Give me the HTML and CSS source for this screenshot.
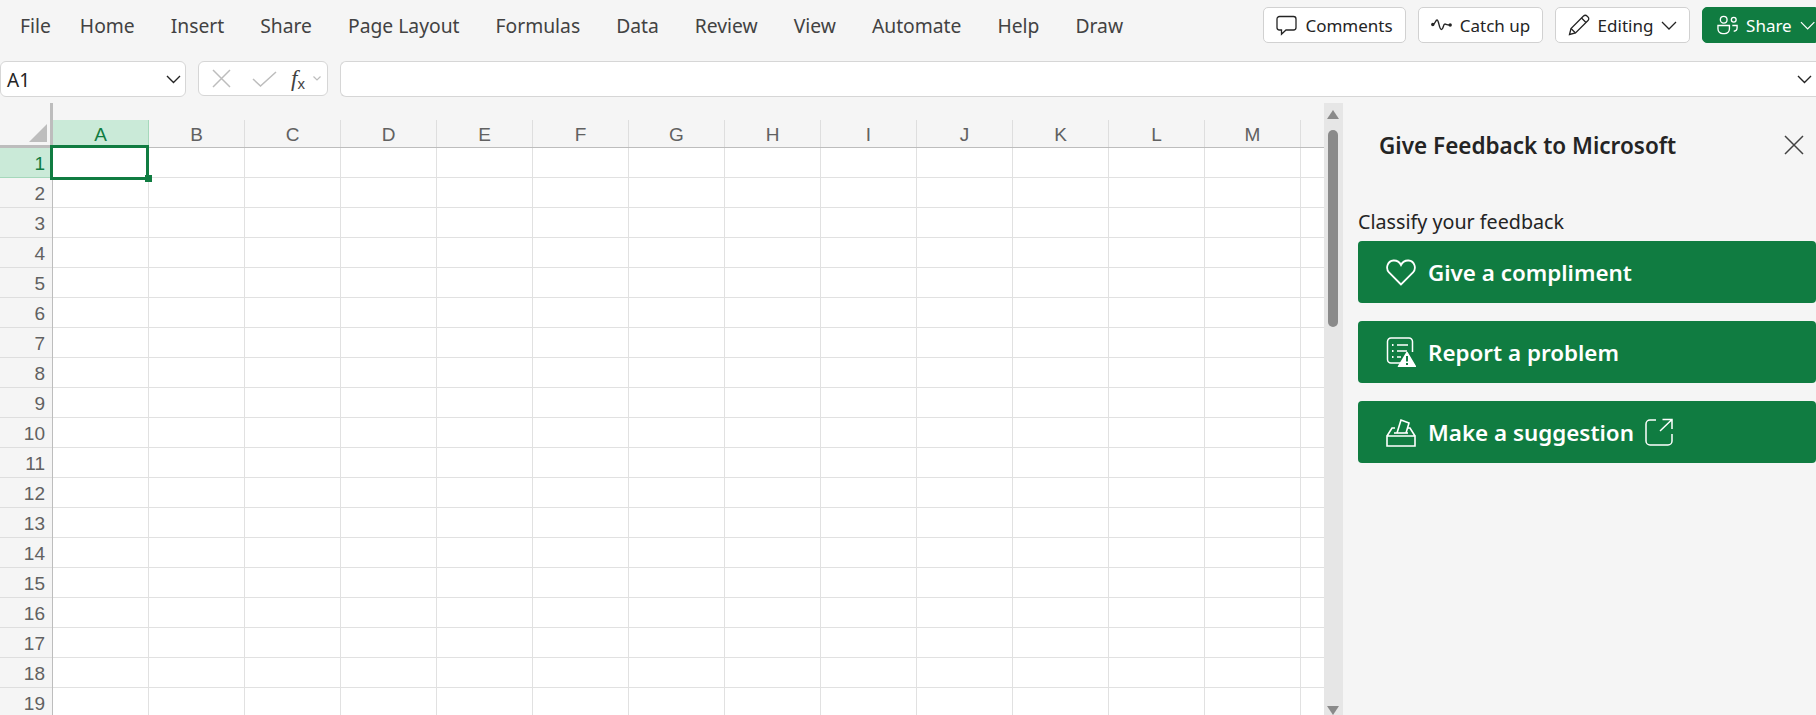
FILE: index.html
```html
<!DOCTYPE html>
<html>
<head>
  <meta charset="UTF-8">
  <title>Book - Excel</title>
  <link rel="stylesheet" href="styles.css">
</head>
<body>
  <div class="menubar">
    <div class="menu">
      <span class="menu-file">File</span>
      <span>Home</span>
      <span>Insert</span>
      <span>Share</span>
      <span>Page Layout</span>
      <span>Formulas</span>
      <span>Data</span>
      <span>Review</span>
      <span>View</span>
      <span>Automate</span>
      <span>Help</span>
      <span>Draw</span>
    </div>
    <div class="actions">
      <button class="btn btn-comments">
        <svg width="21" height="21" viewBox="0 0 21 21" fill="none" stroke="#242424" stroke-width="1.300"><path d="M3.500 1.500h14a2.500 2.500 0 0 1 2.500 2.500v8.500a2.500 2.500 0 0 1-2.500 2.500H10l-4.500 4.300V15h-2A2.500 2.500 0 0 1 1 12.500V4a2.500 2.500 0 0 1 2.500-2.500z"/></svg>
        Comments
      </button>
      <button class="btn btn-catchup">
        <svg width="21" height="12" viewBox="0 0 21 12" fill="none" stroke="#242424" stroke-width="1.400"><circle cx="1.800" cy="5.500" r="1.700" fill="#242424" stroke="none"/><circle cx="19.200" cy="6" r="1.700" fill="#242424" stroke="none"/><path d="M2 5.500c2 0 2.500-4.500 4-4.500 2 0 2 9.500 4.500 9.500 2 0 1.500-5.500 3.500-5.500 1 0 1.500 1 5 1"/></svg>
        Catch up
      </button>
      <button class="btn btn-editing">
        <svg width="22" height="22" viewBox="0 0 22 22" fill="none" stroke="#242424" stroke-width="1.300"><path d="M1.500 20.500l1.500-6L15.500 2a2.400 2.400 0 0 1 3.500 0l1 1a2.400 2.400 0 0 1 0 3.500L7.500 19z"/><path d="M13.500 4l4.500 4.500M3 14.500L7.500 19"/></svg>
        Editing
        <svg class="chev" width="16" height="9" viewBox="0 0 16 9" fill="none" stroke="#242424" stroke-width="1.300"><path d="M1 1l7 7 7-7"/></svg>
      </button>
      <button class="btn btn-share">
        <svg width="22" height="20" viewBox="0 0 22 20" fill="none" stroke="#fff" stroke-width="1.400"><circle cx="7" cy="4.500" r="3.500"/><circle cx="17.500" cy="4.500" r="2.500"/><path d="M1 10.500h12v3.500a5 5 0 0 1-5 5H6a5 5 0 0 1-5-5z"/><path d="M16 10.500h5v2.500a3.500 3.500 0 0 1-3.500 3.500"/></svg>
        Share
        <svg class="chev" width="16" height="9" viewBox="0 0 16 9" fill="none" stroke="#fff" stroke-width="1.300"><path d="M1 1l7 7 7-7"/></svg>
      </button>
    </div>
  </div>

  <div class="formulabar">
    <div class="namebox">
      <span>A1</span>
      <svg width="15" height="9" viewBox="0 0 15 9" fill="none" stroke="#242424" stroke-width="1.400"><path d="M1 1l6.500 6.500L14 1"/></svg>
    </div>
    <div class="fxbox">
      <svg width="19" height="19" viewBox="0 0 19 19" fill="none" stroke="#bdbdbd" stroke-width="1.500"><path d="M1 1l17 17M18 1L1 18"/></svg>
      <svg class="fx-check" width="25" height="16" viewBox="0 0 25 16" fill="none" stroke="#bdbdbd" stroke-width="1.500"><path d="M1 8l7.500 7L24 1"/></svg>
      <span class="fx-label">f<sub>x</sub></span>
      <svg class="fx-chev" width="8" height="5" viewBox="0 0 8 5" fill="none" stroke="#bdbdbd" stroke-width="1.200"><path d="M.5.500L4 4 7.500.500"/></svg>
    </div>
    <div class="formula-input">
      <svg width="15" height="9" viewBox="0 0 15 9" fill="none" stroke="#242424" stroke-width="1.400"><path d="M1 1l6.500 6.500L14 1"/></svg>
    </div>
  </div>

  <div class="main">
    <div class="sheet">
      <div class="col-heads">
        <div class="corner"><div class="corner-tri"></div></div>
        <div class="col active">A</div>
        <div class="col">B</div>
        <div class="col">C</div>
        <div class="col">D</div>
        <div class="col">E</div>
        <div class="col">F</div>
        <div class="col">G</div>
        <div class="col">H</div>
        <div class="col">I</div>
        <div class="col">J</div>
        <div class="col">K</div>
        <div class="col">L</div>
        <div class="col">M</div>
        <div class="col"></div>
      </div>
      <div class="sheet-body">
        <div class="row-heads">
          <div class="row active">1</div>
          <div class="row">2</div>
          <div class="row">3</div>
          <div class="row">4</div>
          <div class="row">5</div>
          <div class="row">6</div>
          <div class="row">7</div>
          <div class="row">8</div>
          <div class="row">9</div>
          <div class="row">10</div>
          <div class="row">11</div>
          <div class="row">12</div>
          <div class="row">13</div>
          <div class="row">14</div>
          <div class="row">15</div>
          <div class="row">16</div>
          <div class="row">17</div>
          <div class="row">18</div>
          <div class="row">19</div>
        </div>
        <div class="cells">
          <div class="selection"><div class="handle"></div></div>
        </div>
      </div>
    </div>

    <div class="scrollbar">
      <div class="arrow-up"></div>
      <div class="thumb"></div>
      <div class="arrow-down"></div>
    </div>

    <div class="panel">
      <div class="panel-head">
        <h2>Give Feedback to Microsoft</h2>
        <svg width="20" height="20" viewBox="0 0 20 20" fill="none" stroke="#424242" stroke-width="1.500"><path d="M1 1l18 18M19 1L1 19"/></svg>
      </div>
      <div class="panel-label">Classify your feedback</div>
      <div class="feedback-btn">
        <svg width="30" height="27" viewBox="0 0 30 27" fill="none" stroke="#fff" stroke-width="1.800"><path d="M15 25.500L3 13.500C-.5 9.500 1 2 7.500 1.500c3.500-.2 6 1.500 7.500 4.500 1.500-3 4-4.700 7.500-4.500C29 2 30.500 9.500 27 13.500z"/></svg>
        <span>Give a compliment</span>
      </div>
      <div class="feedback-btn">
        <svg width="30" height="30" viewBox="0 0 30 30" fill="none" stroke="#fff" stroke-width="1.500"><path d="M15 26H5a3.500 3.500 0 0 1-3.500-3.500v-18A3.500 3.500 0 0 1 5 1h18a3.500 3.500 0 0 1 3.500 3.500V15"/><path d="M11 8h11M11 14h10M11 20h4"/><path d="M6 8h1.500M6 14h1.500M6 20h1.500" stroke-width="2"/><path d="M21 15.500l8.500 14h-17z" fill="#fff" stroke-linejoin="round"/><path d="M21 19v5.500M21 26v2" stroke="#107c41" stroke-width="2"/></svg>
        <span>Report a problem</span>
      </div>
      <div class="feedback-btn">
        <svg width="30" height="30" viewBox="0 0 30 30" fill="none" stroke="#fff" stroke-width="1.600"><path d="M1 19h28v10H1zM1 19l5-8h3M29 19l-5-8h-3"/><path d="M11 16l4-13 8 3-3 10" /><path d="M8 16h14"/></svg>
        <span>Make a suggestion</span>
        <svg class="ext" width="28" height="28" viewBox="0 0 28 28" fill="none" stroke="#fff" stroke-width="1.500"><path d="M11 2H5a4 4 0 0 0-4 4v17a4 4 0 0 0 4 4h18a4 4 0 0 0 4-4v-7"/><path d="M27 11V1.500h-9.500M27 1.500L15 13"/></svg>
      </div>
    </div>
  </div>
</body>
</html>
```

FILE: styles.css
```css
* {
  box-sizing: border-box;
}
body {
  margin: 0;
  height: 715px;
  overflow: hidden;
  background-color: #f5f5f5;
  font-family: "Noto Sans", sans-serif;
  color: #242424;
  display: flex;
  flex-direction: column;
}

/* top menu */
.menubar {
  height: 61px;
  flex: none;
  display: flex;
  justify-content: space-between;
  padding: 7px 0 0 20px;
}
.menu {
  display: flex;
  gap: 36px;
  height: 36px;
  align-items: center;
  font-size: 19.300px;
  color: #424242;
}
.menu-file {
  margin-right: -7px;
}
.actions {
  display: flex;
  gap: 12px;
}
.btn {
  height: 36px;
  display: flex;
  align-items: center;
  justify-content: center;
  gap: 8px;
  padding: 0;
  font-family: inherit;
  font-size: 17px;
  color: #242424;
  background-color: #fff;
  border: 1px solid #d1d1d1;
  border-radius: 5px;
}
.btn-comments {
  width: 143px;
}
.btn-catchup {
  width: 125px;
}
.btn-editing {
  width: 135px;
}
.btn-share {
  width: 114px;
  color: #fff;
  background-color: #107c41;
  border-color: #107c41;
  border-radius: 5px 0 0 5px;
  justify-content: flex-start;
  padding-left: 14px;
}

/* name box and formula input */
.formulabar {
  height: 36px;
  flex: none;
  display: flex;
  gap: 12px;
}
.namebox,
.fxbox,
.formula-input {
  background-color: #fff;
  border: 1px solid #d6d6d6;
  border-radius: 6px;
  display: flex;
  align-items: center;
}
.namebox {
  width: 186px;
  justify-content: space-between;
  padding: 0 4px 0 6px;
  font-size: 19px;
}
.namebox span {
  padding-top: 2px;
}
.fxbox {
  width: 130px;
  height: 35px;
  padding-left: 13px;
}
.fx-check {
  margin-left: 21px;
}
.fx-label {
  margin-left: 14px;
  font-family: "Liberation Serif", serif;
  font-style: italic;
  font-size: 23px;
  line-height: 1;
  color: #424242;
}
.fx-label sub {
  font-family: "Liberation Sans", sans-serif;
  font-style: normal;
  font-size: 15px;
  vertical-align: -3px;
  line-height: 0;
}
.fx-chev {
  margin-left: 8px;
}
.formula-input {
  flex: 1;
  justify-content: flex-end;
  padding-right: 4px;
  border-right: none;
  border-radius: 6px 0 0 6px;
}

/* sheet */
.main {
  flex: 1;
  display: flex;
  margin-top: 6px;
  min-height: 0;
}
.sheet {
  width: 1324px;
  flex: none;
  overflow: hidden;
  font-family: "Liberation Sans", sans-serif;
  font-size: 19px;
  color: #616161;
}
.col-heads {
  display: flex;
  height: 45px;
  padding-top: 17px;
  border-bottom: 1px solid #bdbdbd;
}
.corner {
  width: 53px;
  flex: none;
  position: relative;
}
.corner::before {
  content: "";
  position: absolute;
  right: 0;
  bottom: -1px;
  width: 3px;
  height: 45px;
  background-color: #bdbdbd;
}
.corner::after {
  content: "";
  position: absolute;
  left: 0;
  right: 0;
  bottom: -1px;
  height: 3px;
  background-color: #bdbdbd;
}
.corner-tri {
  position: absolute;
  left: 29px;
  top: 4px;
  width: 0;
  height: 0;
  border-left: 18px solid transparent;
  border-bottom: 18px solid #bdbdbd;
}
.col {
  width: 96px;
  flex: none;
  display: flex;
  align-items: center;
  justify-content: center;
  padding-top: 2px;
  border-right: 1px solid #dedede;
}
.col.active {
  color: #107c41;
  background-color: #caead8;
  border-right-color: #a5d8bb;
}
.sheet-body {
  display: flex;
}
.row-heads {
  width: 53px;
  flex: none;
  border-right: 1px solid #bdbdbd;
}
.row {
  height: 30px;
  display: flex;
  align-items: center;
  justify-content: flex-end;
  padding: 3px 7px 0 0;
  border-bottom: 1px solid #dedede;
}
.row.active {
  color: #107c41;
  background-color: #caead8;
  border-bottom-color: #a5d8bb;
}
.cells {
  flex: 1;
  position: relative;
  background-color: #fff;
  background-image:
    linear-gradient(to left, #e1e1e1 1px, transparent 1px),
    linear-gradient(to top, #e1e1e1 1px, transparent 1px);
  background-size: 96px 30px;
}
.selection {
  position: absolute;
  left: -3px;
  top: -3px;
  width: 99px;
  height: 35px;
  border: 3px solid #107c41;
}
.handle {
  position: absolute;
  right: -6px;
  bottom: -5px;
  width: 7px;
  height: 7px;
  background-color: #107c41;
}

/* scrollbar */
.scrollbar {
  width: 19px;
  flex: none;
  position: relative;
  background-color: #e6e6e6;
}
.arrow-up,
.arrow-down {
  position: absolute;
  left: 3px;
  width: 0;
  height: 0;
  border-left: 6.500px solid transparent;
  border-right: 6.500px solid transparent;
}
.arrow-up {
  top: 7px;
  border-bottom: 9px solid #8a8a8a;
}
.arrow-down {
  bottom: 0;
  border-top: 9px solid #8a8a8a;
}
.thumb {
  position: absolute;
  left: 4px;
  top: 27px;
  width: 10px;
  height: 197px;
  background-color: #8a8a8a;
  border-radius: 5px;
}

/* feedback panel */
.panel {
  flex: 1;
  padding: 27px 0 0 15px;
}
.panel-head {
  display: flex;
  justify-content: space-between;
  align-items: center;
  height: 30px;
  padding: 0 12px 0 21px;
}
.panel-head h2 {
  margin: 0;
  font-size: 22.500px;
  font-weight: 600;
}
.panel-label {
  margin-top: 49px;
  margin-bottom: 6px;
  height: 26px;
  line-height: 26px;
  font-size: 19.700px;
}
.feedback-btn {
  height: 62px;
  margin-bottom: 18px;
  display: flex;
  align-items: center;
  padding-left: 28px;
  color: #fff;
  background-color: #107c41;
  border-radius: 4px;
  font-size: 22.400px;
  font-weight: 600;
}
.feedback-btn span {
  margin-left: 12px;
  padding-top: 1px;
}
.feedback-btn .ext {
  margin-left: 11px;
}
```
